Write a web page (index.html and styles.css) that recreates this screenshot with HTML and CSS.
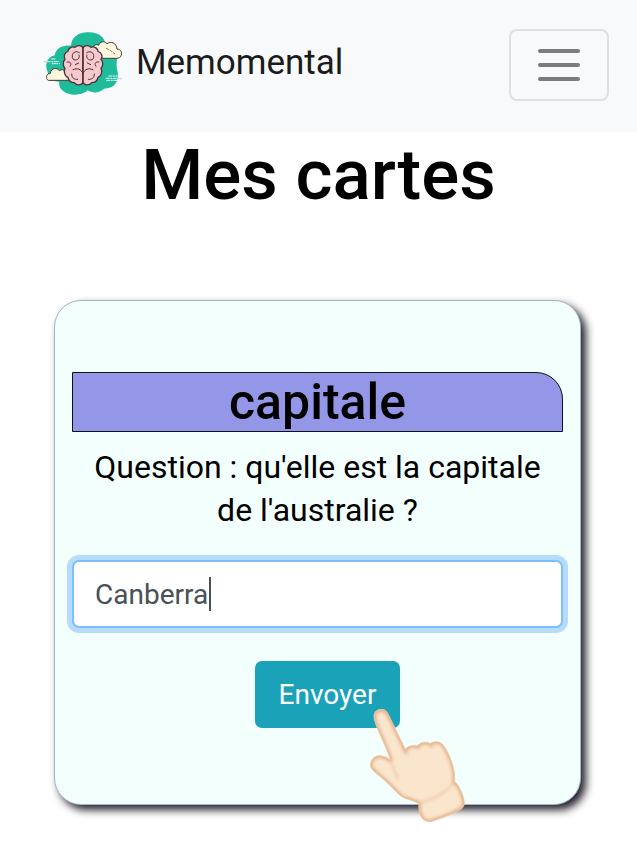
FILE: index.html
```html
<!DOCTYPE html>
<html lang="fr">
<head>
<meta charset="utf-8">
<meta name="viewport" content="width=device-width, initial-scale=1">
<title>Memomental</title>
<link rel="stylesheet" href="styles.css">
</head>
<body>
<header class="navbar">
  <a class="brand" href="#">
    <svg class="logo" viewBox="24 30 240 201" aria-hidden="true">
      <path fill="#1fbc9c" d="M108 77C109 52 131 36 160 37C190 36 210 51 212 75C232 79 245 96 246 118C245 130 244 138 246 148C253 169 247 193 230 201C220 205 211 204 205 208C193 220 171 220 158 211C145 226 101 231 82 211C74 205 72 194 72 185L43 181L38 155C29 140 34 111 59 106C62 84 85 73 108 77Z"/>
      <g fill="#fff6df" stroke="#4c3832" stroke-width="3" stroke-linejoin="round">
        <path d="M181 105C179 98 174 91 172 84C175 76 184 71 191 76C194 65 208 61 216 71C228 63 244 68 246 87C258 88 262 98 259 106C257 112 252 115 243 115H203Z"/>
        <path d="M40 181C31 177 32 161 46 160C48 144 66 141 73 152C82 146 91 151 94 160C106 161 112 169 109 181Z"/>
      </g>
      <path d="M213 85l14 7 13 10" fill="none" stroke="#4c3832" stroke-width="2" stroke-dasharray="9 3"/>
      <g fill="#f5c9cd" stroke="#4c3336" stroke-width="4" stroke-linejoin="round">
        <path d="M144 83C137 73 124 77 120 82C109 77 99 87 99 94C87 97 86 112 90 118C82 126 84 140 90 145C84 157 91 169 99 172C101 183 110 188 118 188C125 198 141 196 144 187Z"/>
        <path d="M144 83C151 73 164 77 168 82C179 77 189 87 189 94C201 97 204 112 198 118C206 126 204 140 198 145C204 157 197 169 189 172C187 183 178 188 170 188C163 198 147 196 144 187Z"/>
      </g>
      <path d="M133 98c-8-6-20-2-21 8s3 14 9 14c10-1 14-8 11-15M155 98c8-6 20-2 21 8s-3 14-9 14c-10-1-14-8-11-15M96 126c12-2 15 6 9 13M192 126c-12-2-15 6-9 13M114 149c14-6 24-2 30 11M174 149c-14-6-24-2-30 11M110 162c0 12 7 17 18 16M178 162c0 12-7 17-18 16M121 134l10-5M167 134l-10-5M144 79v112" fill="none" stroke="#4c3336" stroke-width="3" stroke-linecap="round"/>
      <path d="M49 117h13M35 125h37M50 131h25M220 168h28M212 175h36M214 181h34" stroke="#e7fff7" stroke-width="3" stroke-dasharray="12 2 5 2"/>
      <path d="M26 125h10M38 119l-4 8M249 176h12" fill="none" stroke="#aebbbb" stroke-width="2"/>
    </svg>
    <span>Memomental</span>
  </a>
  <button class="toggler" type="button" aria-label="Menu">
    <svg class="bars" viewBox="0 0 44 44" aria-hidden="true"><path d="M3 8H41M3 22H41M3 36H41" fill="none" stroke="#7b7c7d" stroke-width="4" stroke-linecap="round"/></svg>
  </button>
</header>
<main>
  <h1>Mes cartes</h1>
  <form class="card">
    <h2>capitale</h2>
    <label class="question" for="answer">Question : qu'elle est la capitale de l'australie ?</label>
    <div class="field">
      <input id="answer" type="text" value="Canberra" autocomplete="off">
      <span class="caret"></span>
    </div>
    <div class="actions">
      <div class="action">
        <button class="send" type="button">Envoyer</button>
        <svg class="hand" viewBox="0 0 375 555" aria-hidden="true">
          <defs>
            <filter id="soft" x="-20%" y="-20%" width="140%" height="140%"><feGaussianBlur stdDeviation="5"/></filter>
            <clipPath id="shape"><path id="outline" d="M57 202C55 187 65 179 78 178C88 177 94 182 99 191L151 298C157 289 171 284 187 288C194 276 216 273 226 281C239 271 257 274 266 287C279 305 292 334 297 361C300 376 298 387 299 396C312 404 326 436 328 456C331 470 317 480 302 486C280 497 251 508 227 515C211 517 199 505 194 491C190 480 193 468 190 460C170 449 149 447 137 438C121 424 102 401 77 381C63 369 45 358 46 344C48 327 62 315 77 317C91 319 99 323 107 331C98 302 80 266 67 235C62 222 58 212 57 202Z"/></clipPath>
          </defs>
          <use href="#outline" fill="#fae5cd"/>
          <g clip-path="url(#shape)" fill="none" stroke="#e5b58e">
            <use href="#outline" stroke-width="14" filter="url(#soft)"/>
            <path d="M105 328C113 350 121 370 130 388M150 295L157 316M187 287L192 299M226 281L232 294M299 394C283 420 240 448 190 460" stroke-width="5" opacity=".65" filter="url(#soft)"/>
          </g>
          <use href="#outline" fill="none" stroke="#edc6a3" stroke-width="2"/>
        </svg>
      </div>
    </div>
  </form>
</main>
</body>
</html>
```
FILE: styles.css
```css
* {
  box-sizing: border-box;
}

body {
  margin: 0;
  background: #fff;
  color: #000;
  font-family: Roboto, "Liberation Sans", sans-serif;
  font-size: 28px;
}

.navbar {
  display: flex;
  align-items: center;
  justify-content: space-between;
  min-height: 132px;
  padding: 28px 28px 30px 43px;
  background: #f8f9fb;
}

.brand {
  display: flex;
  align-items: center;
  gap: 13px;
  padding-bottom: 4px;
  color: #1b1b1c;
  font-size: 35px;
  line-height: 52px;
  text-decoration: none;
}

.logo {
  width: 80px;
  height: 67px;
}

.toggler {
  display: grid;
  place-items: center;
  padding: 12px 26px;
  border: 2px solid #dfe0e2;
  border-radius: 8px;
  background: transparent;
}

.bars {
  width: 44px;
  height: 44px;
}

h1,
h2 {
  margin: 0;
  font-weight: 500;
  text-align: center;
}

h1 {
  font-size: 71px;
  line-height: 86px;
}

.card {
  margin: 82px 56px 40px 54px;
  padding: 71px 17px 76px;
  border: 1px solid #a5b3c9;
  border-radius: 27px;
  background: #f3fffc;
  box-shadow: 5px 5px 8px #25222c;
}

h2 {
  border: 1px solid #101018;
  border-top-right-radius: 27px;
  background: #9496e7;
  font-size: 50px;
  line-height: 58px;
}

.question {
  display: block;
  margin: 14px 20px 28px;
  font-size: 32px;
  line-height: 43px;
  text-align: center;
}

.field {
  position: relative;
}

.field input {
  display: block;
  width: 100%;
  height: 68px;
  padding: 10px 21px;
  border: 2px solid #80bdff;
  border-radius: 7px;
  outline: none;
  background: #fff;
  box-shadow: 0 0 0 5px #b5dcfb;
  color: #495057;
  font: inherit;
}

.caret {
  position: absolute;
  top: 17px;
  left: 137px;
  width: 2px;
  height: 34px;
  background: #495057;
}

.actions {
  display: flex;
  justify-content: center;
  margin-top: 33px;
  padding-left: 20px;
}

.action {
  position: relative;
}

.send {
  display: block;
  padding: 12px 24px;
  border: 0;
  border-radius: 7px;
  background: #19a2b8;
  color: #fff;
  font: inherit;
  line-height: 43px;
}

.hand {
  position: absolute;
  top: -11px;
  left: 100px;
  width: 125px;
  height: 185px;
  pointer-events: none;
}
```
